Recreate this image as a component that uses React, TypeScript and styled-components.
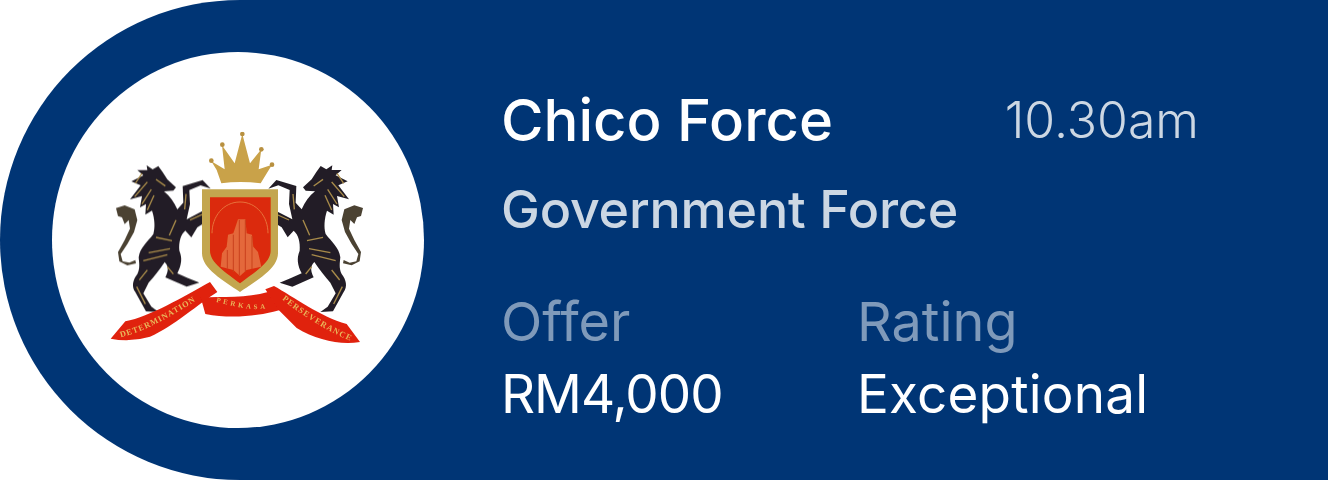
import { createGlobalStyle } from "styled-components";
import styled from "styled-components";

const GlobalStyle = createGlobalStyle`
  html, body {
    margin: 0;
    padding: 0;
    background: #fff;
  }
`;

const Card = styled.div`
  box-sizing: border-box;
  width: 1328px;
  height: 480px;
  display: flex;
  align-items: flex-start;
  padding: 52px 0 0 52px;
  background: #003575;
  border-radius: 240px 0 0 240px;
  font-family: Inter, "Liberation Sans", sans-serif;
`;

const LogoCircle = styled.div`
  flex: none;
  width: 372px;
  height: 376px;
  border-radius: 50%;
  background: #fff;
  overflow: hidden;
`;

const Details = styled.div`
  display: flex;
  flex-direction: column;
  margin: 36px 0 0 77px;
  width: 698px;
`;

const TitleRow = styled.div`
  display: flex;
  align-items: flex-start;
  justify-content: space-between;
`;

const Title = styled.div`
  font-size: 58px;
  line-height: 64px;
  font-weight: 500;
  color: #fff;
`;

const Time = styled.div`
  font-size: 50px;
  line-height: 64px;
  font-weight: 300;
  color: #ccd7e3;
`;

const Subtitle = styled.div`
  margin-top: 29px;
  font-size: 52px;
  line-height: 58px;
  font-weight: 500;
  letter-spacing: -0.2px;
  color: #ccd7e3;
`;

const Stats = styled.div`
  display: grid;
  grid-template-columns: 356px 1fr;
  margin-top: 54px;
`;

const Stat = styled.div`
  display: flex;
  flex-direction: column;
  gap: 14px;
`;

const StatLabel = styled.div`
  font-size: 54px;
  line-height: 58px;
  font-weight: 400;
  color: #7f9aba;
`;

const StatValue = styled.div<{ $spacing: number }>`
  font-size: 53px;
  line-height: 58px;
  font-weight: 400;
  letter-spacing: ${(props) => props.$spacing}px;
  color: #fff;
`;

const Horse = () => (
  <g>
    {/* tail */}
    <path
      d="M78 264 L104 256 L134 268 L142 300 L132 336 L112 372 L92 402 L98 424 L118 428 L136 420 L138 430 L112 436 L88 424 L84 396 L104 360 L120 326 L116 300 L104 312 L96 292 L84 288 Z"
      fill="#4b4233"
    />
    {/* body */}
    <path
      d="M205 138 L188 148 L170 136 L172 150 L142 150 L160 166 L124 184 L152 196 L120 238 L156 228 L150 262 L168 252 L166 284 L186 272 C194 296 196 322 190 342 C172 366 150 382 146 412 C148 432 150 446 142 462 C128 480 124 500 136 516 L168 574 L206 576 L184 560 L160 520 L176 488 C192 470 208 450 224 426 C238 440 234 456 226 472 L290 500 L328 488 L294 474 L262 460 C274 436 278 416 268 392 C266 366 272 344 286 332 L304 352 L322 322 L354 302 L358 278 L340 272 L290 298 L300 252 L298 210 L332 196 L362 206 L338 180 L278 198 L280 248 L262 268 C252 246 240 228 222 214 L250 212 L258 202 L232 178 L218 156 Z"
      fill="#241f26"
    />
    {/* gold highlights */}
    <path
      d="M136 190 L156 160 M134 230 L172 186 M156 252 L184 208 M172 270 L192 226 M198 178 L226 198 M176 398 L240 386 M160 422 L232 404 M258 300 L238 346 M198 352 L246 362 M148 480 L172 450 M288 222 L284 268 M232 440 L250 462 M300 300 L340 282 M140 500 L166 552"
      stroke="#a88a4a"
      strokeWidth="4"
      fill="none"
    />
  </g>
);

const Crest = () => (
  <svg width="372" height="376" viewBox="-114 -204 1116 1128">
    <defs>
      <filter id="soft">
        <feGaussianBlur stdDeviation="2.2" />
      </filter>
      <path id="bandLeft" d="M92 652 C170 632 250 586 330 534" />
      <path id="bandMid" d="M378 546 C420 556 480 572 530 566" />
      <path id="bandRight" d="M576 538 C640 590 710 632 792 668" />
    </defs>
    <g filter="url(#soft)">
      <Horse />
      <g transform="translate(897 0) scale(-1 1)">
        <Horse />
      </g>
      {/* crown */}
      <path
        d="M394 190 L380 150 L364 124 L404 148 L396 76 L434 130 L457 42 L480 130 L514 88 L506 148 L546 134 L512 190 Q450 182 394 190 Z"
        fill="#c9a24a"
      />
      <circle cx="457" cy="42" r="7" fill="#b8903f" />
      <circle cx="397" cy="74" r="7" fill="#b8903f" />
      <circle cx="514" cy="88" r="7" fill="#b8903f" />
      <circle cx="364" cy="122" r="7" fill="#b8903f" />
      <circle cx="546" cy="134" r="7" fill="#b8903f" />
      {/* shield */}
      <path
        d="M336 208 L564 208 L564 400 C564 446 500 482 450 516 C400 482 336 446 336 400 Z"
        fill="#c3a650"
      />
      <path
        d="M360 232 L542 232 L542 392 C542 430 490 458 450 490 C410 458 360 430 360 392 Z"
        fill="#db2b08"
      />
      <path
        d="M366 340 C366 290 400 246 450 246 C500 246 534 290 534 340"
        stroke="#e8703f"
        strokeWidth="3"
        fill="none"
      />
      {/* building */}
      <path
        d="M444 298 L466 298 L470 340 L486 344 L490 380 L504 396 L514 440 L470 450 L450 468 L430 450 L392 440 L396 400 L410 380 L414 344 L430 340 Z"
        fill="#e4683a"
      />
      <path
        d="M412 390 L412 446 M430 344 L430 456 M448 300 L448 466 M466 300 L466 456 M486 348 L486 448"
        stroke="#c9401c"
        strokeWidth="3"
        fill="none"
      />
      {/* ribbon */}
      <path
        d="M62 656 L106 604 C180 590 280 530 360 486 L382 516 C330 548 250 620 180 650 Q120 668 62 656 Z"
        fill="#e0200f"
      />
      <path
        d="M332 532 C400 530 470 534 534 516 L570 570 C500 590 420 596 346 582 Z"
        fill="#e0200f"
      />
      <path
        d="M526 508 L552 498 C610 530 690 590 770 612 L810 666 C750 676 680 660 620 624 L566 570 Z"
        fill="#e0200f"
      />
      <g fontFamily="'Liberation Serif', serif" fontSize="25" fontWeight="700" fill="#e9b85a">
        <text>
          <textPath href="#bandLeft" textLength="250">DETERMINATION</textPath>
        </text>
        <text fontSize="21">
          <textPath href="#bandMid" textLength="150">PERKASA</textPath>
        </text>
        <text>
          <textPath href="#bandRight" textLength="240">PERSEVERANCE</textPath>
        </text>
      </g>
    </g>
  </svg>
);

export default function App() {
  return (
    <>
      <GlobalStyle />
      <Card>
        <LogoCircle>
          <Crest />
        </LogoCircle>
        <Details>
          <TitleRow>
            <Title>Chico Force</Title>
            <Time>10.30am</Time>
          </TitleRow>
          <Subtitle>Government Force</Subtitle>
          <Stats>
            <Stat>
              <StatLabel>Offer</StatLabel>
              <StatValue $spacing={-1}>RM4,000</StatValue>
            </Stat>
            <Stat>
              <StatLabel>Rating</StatLabel>
              <StatValue $spacing={0.2}>Exceptional</StatValue>
            </Stat>
          </Stats>
        </Details>
      </Card>
    </>
  );
}
